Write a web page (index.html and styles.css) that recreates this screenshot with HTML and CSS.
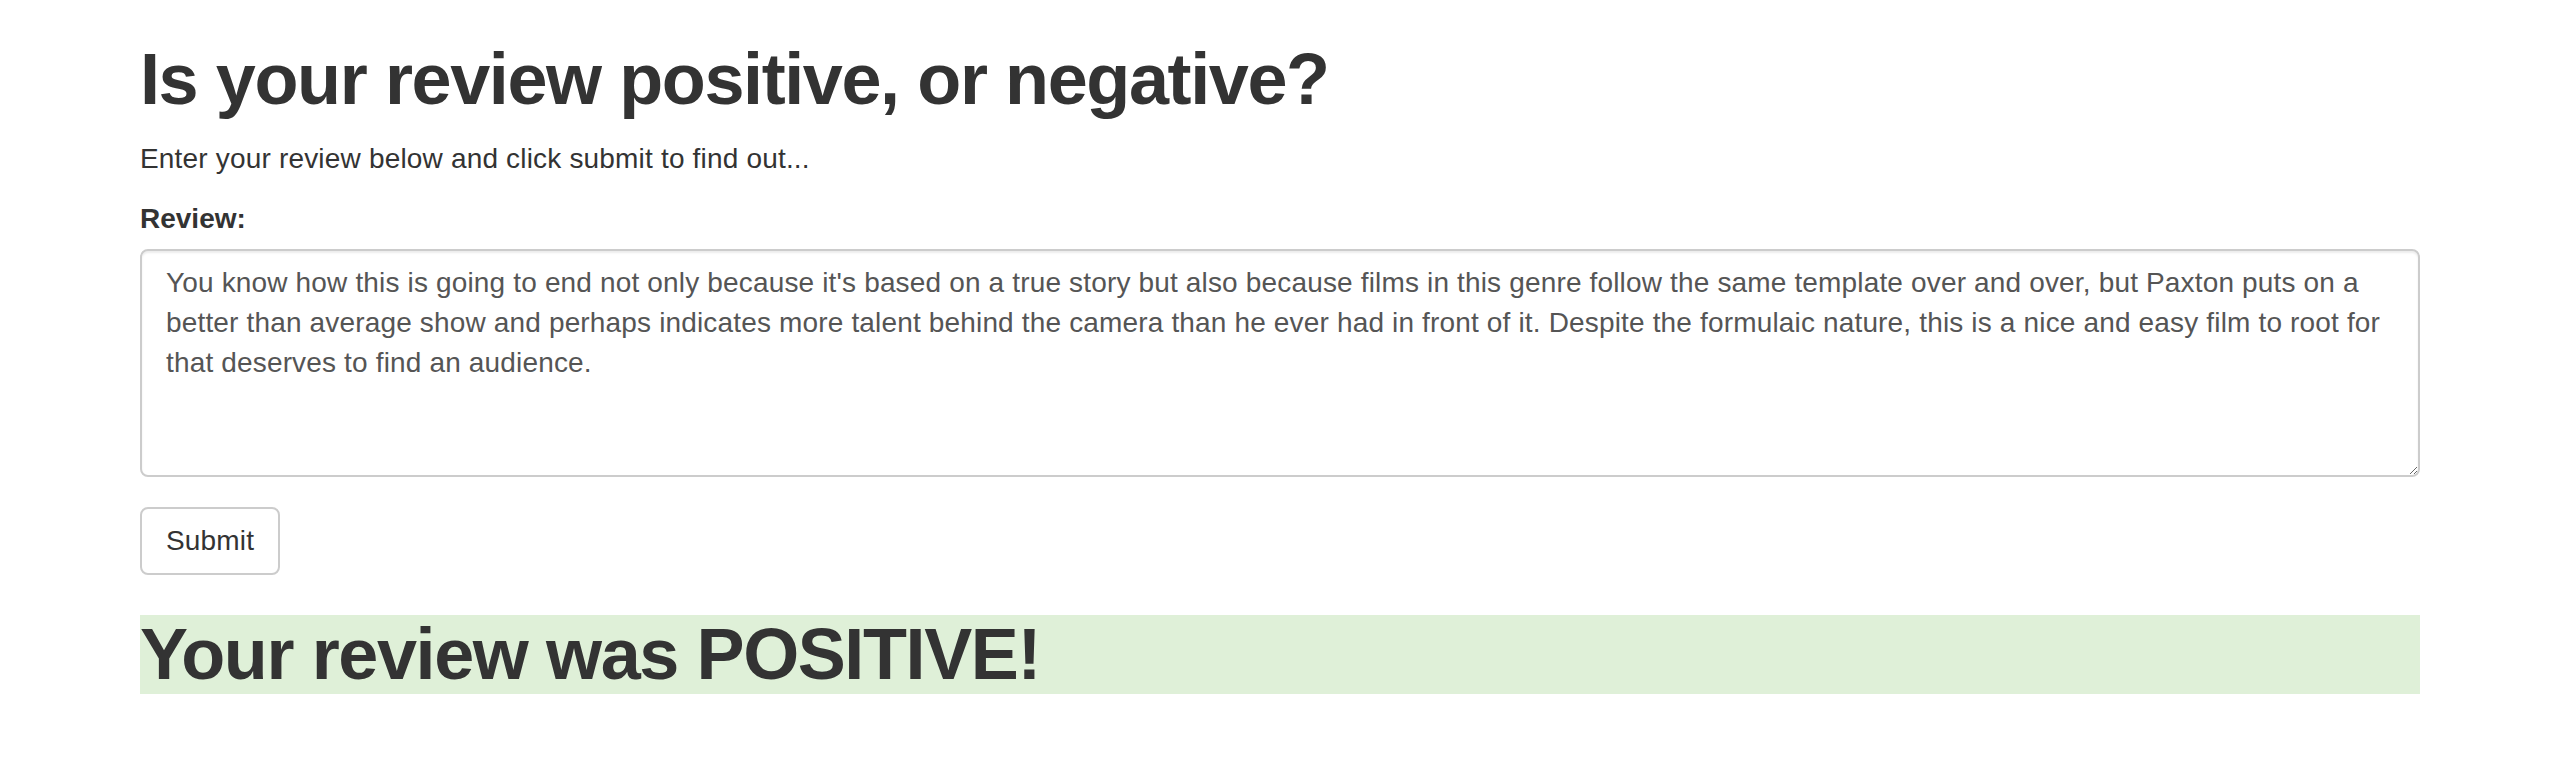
FILE: index.html
```html
<!DOCTYPE html>
<html lang="en">
<head>
<meta charset="utf-8">
<title>Sentiment</title>
<link rel="stylesheet" href="styles.css">
</head>
<body>
<div class="container">
  <h1 class="title">Is your review positive, or negative?</h1>
  <p class="lead-text">Enter your review below and click submit to find out...</p>
  <form class="form">
    <div class="form-group">
      <label class="label" for="review">Review:</label>
      <textarea id="review" class="form-control" rows="5">You know how this is going to end not only because it's based on a true story but also because films in this genre follow the same template over and over, but Paxton puts on a better than average show and perhaps indicates more talent behind the camera than he ever had in front of it. Despite the formulaic nature, this is a nice and easy film to root for that deserves to find an audience.</textarea>
    </div>
    <button type="button" class="btn">Submit</button>
  </form>
  <h1 class="title result">Your review was POSITIVE!</h1>
</div>
</body>
</html>
```

FILE: styles.css
```css
* { box-sizing: border-box; }
html, body { margin: 0; padding: 0; }
body {
  font-family: "Liberation Sans", Arial, Helvetica, sans-serif;
  font-size: 28px;
  line-height: 1.42857143;
  letter-spacing: 0.18px;
  color: #333;
  background: #fff;
}
.container {
  width: 2340px;
  margin: 0 auto;
  padding: 0 30px;
}
.title {
  font-size: 72px;
  font-weight: 700;
  line-height: 1.1;
  letter-spacing: -1.4px;
  margin: 40px 0 20px;
  color: #333;
}
.lead-text { margin: 0 0 20px; }
.form { margin: 0; }
.form-group { margin-bottom: 30px; }
.label {
  display: inline-block;
  max-width: 100%;
  margin-bottom: 10px;
  font-weight: 700;
  letter-spacing: 0;
}
.form-control {
  display: block;
  width: 100%;
  padding: 12px 24px;
  font-family: inherit;
  font-size: 28px;
  line-height: 1.42857143;
  letter-spacing: 0.16px;
  color: #555;
  background: #fff;
  border: 2px solid #ccc;
  border-radius: 8px;
  box-shadow: inset 0 2px 2px rgba(0,0,0,.075);
  resize: vertical;
  height: 228px;
  margin: 0;
}
.btn {
  display: inline-block;
  padding: 12px 24px;
  font-family: inherit;
  font-size: 28px;
  line-height: 1.42857143;
  letter-spacing: 0.18px;
  color: #333;
  background: #fff;
  border: 2px solid #ccc;
  border-radius: 8px;
  cursor: pointer;
  margin: 0;
}
.result {
  background-color: #dff0d8;
}
```
